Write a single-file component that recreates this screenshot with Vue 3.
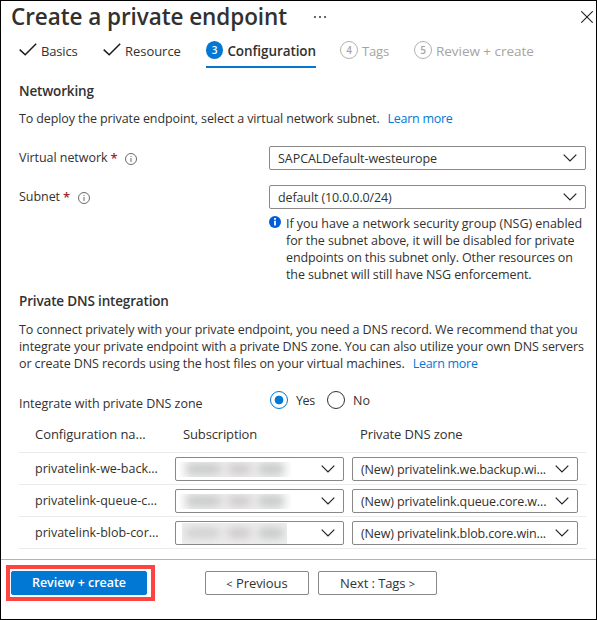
<script setup>
import { ref } from 'vue'

const integrate = ref('yes')
const zones = [
  { name: 'privatelink-we-back...', zone: '(New) privatelink.we.backup.wi...', mask: 'mask-a' },
  { name: 'privatelink-queue-c...', zone: '(New) privatelink.queue.core.w...', mask: 'mask-b' },
  { name: 'privatelink-blob-cor...', zone: '(New) privatelink.blob.core.win...', mask: 'mask-c' },
]
</script>

<template>
  <div class="blade">
    <header class="title-bar">
      <h1>Create a private endpoint</h1>
      <svg class="more" width="12" height="2" viewBox="0 0 12 2"><path d="M0 0h2v2H0zM5 0h2v2H5zM10 0h2v2h-2z" fill="#666" /></svg>
      <svg class="close" width="12" height="12" viewBox="0 0 12 12"><path d="M.3.3l11.4 11.4M11.7.3L.3 11.7" stroke="#222" stroke-width="1.1" fill="none" /></svg>
    </header>

    <nav class="tabs">
      <div class="tab basics">
        <svg width="18" height="13" viewBox="0 0 18 13"><path d="M.7 6.6l5.5 5.2L17.2.7" fill="none" stroke="#1b1a19" stroke-width="1.5" /></svg>
        <span>Basics</span>
      </div>
      <div class="tab resource">
        <svg width="18" height="13" viewBox="0 0 18 13"><path d="M.7 6.6l5.5 5.2L17.2.7" fill="none" stroke="#1b1a19" stroke-width="1.5" /></svg>
        <span>Resource</span>
      </div>
      <div class="tab active"><i>3</i><span>Configuration</span></div>
      <div class="tab pending tags"><i>4</i><span>Tags</span></div>
      <div class="tab pending review"><i>5</i><span>Review + create</span></div>
    </nav>

    <main>
      <h2>Networking</h2>
      <p class="intro">To deploy the private endpoint, select a virtual network subnet.<a>Learn more</a></p>

      <div class="field first">
        <label><span class="vn">Virtual network</span> <b>*</b>
          <svg width="12" height="12" viewBox="0 0 12 12"><circle cx="6" cy="6" r="5.5" fill="none" stroke="#6b6967" /><path d="M6 5v4M6 3v1" stroke="#6b6967" stroke-width="1" /></svg>
        </label>
        <div class="select wide"><span>SAPCALDefault-westeurope</span>
          <svg width="14" height="8" viewBox="0 0 14 8"><path d="M.7.7L7 7 13.3.7" fill="none" stroke="#222" stroke-width="1.2" /></svg>
        </div>
      </div>
      <div class="field">
        <label><span>Subnet</span> <b>*</b>
          <svg width="12" height="12" viewBox="0 0 12 12"><circle cx="6" cy="6" r="5.5" fill="none" stroke="#6b6967" /><path d="M6 5v4M6 3v1" stroke="#6b6967" stroke-width="1" /></svg>
        </label>
        <div class="select wide subnet"><span>default (10.0.0.0/24)</span>
          <svg width="14" height="8" viewBox="0 0 14 8"><path d="M.7.7L7 7 13.3.7" fill="none" stroke="#222" stroke-width="1.2" /></svg>
        </div>
      </div>

      <div class="notice">
        <svg width="12" height="12" viewBox="0 0 12 12"><circle cx="6" cy="6" r="6" fill="#015cda" /><path d="M5.1 2h1.8v1.7H5.1zM5.1 4.7h1.8v4.8H5.1z" fill="#fff" /></svg>
        <p>If you have a network security group (NSG) enabled<br><span class="l2">for the subnet above, it will be disabled for private</span><br><span class="l3">endpoints on this subnet only. Other resources on</span><br><span class="l4">the subnet will still have NSG enforcement.</span></p>
      </div>

      <h2 class="dns-heading">Private DNS integration</h2>
      <p class="dns">To connect privately with your private endpoint, you need a DNS record. We recommend that you<br>integrate your private endpoint with a private DNS zone. You can also utilize your own DNS servers<br>or create DNS records using the host files on your virtual machines.<a>Learn more</a></p>

      <div class="radio-row">
        <span class="question">Integrate with private DNS zone</span>
        <span class="radio" :class="{ on: integrate === 'yes' }" @click="integrate = 'yes'"></span><span class="yes">Yes</span>
        <span class="radio" :class="{ on: integrate === 'no' }" @click="integrate = 'no'"></span><span class="no">No</span>
      </div>

      <div class="grid">
        <div class="grid-row head"><span class="c1">Configuration na...</span><span class="c2">Subscription</span><span class="c3">Private DNS zone</span></div>
        <div v-for="z in zones" :key="z.name" class="grid-row">
          <span class="name">{{ z.name }}</span>
          <div class="select sub"><div class="mask" :class="z.mask"><i></i><i></i><i></i></div>
            <svg width="14" height="8" viewBox="0 0 14 8"><path d="M.7.7L7 7 13.3.7" fill="none" stroke="#222" stroke-width="1.2" /></svg>
          </div>
          <div class="select zone"><span>{{ z.zone }}</span>
            <svg width="14" height="8" viewBox="0 0 14 8"><path d="M.7.7L7 7 13.3.7" fill="none" stroke="#222" stroke-width="1.2" /></svg>
          </div>
        </div>
      </div>
    </main>

    <footer>
      <div class="highlight"><button class="primary">Review + create</button></div>
      <button class="prev"><small>&lt;</small> Previous</button>
      <button class="next">Next : Tags <small>&gt;</small></button>
    </footer>
  </div>
</template>

<style>
body { margin: 0; background: #fff; }
</style>

<style scoped>
* { box-sizing: border-box; margin: 0; padding: 0; }
.blade {
  width: 597px; height: 620px; overflow: hidden;
  display: flex; flex-direction: column;
  border: 1px solid #000; background: #fff; color: #323130;
  font: 12.5px/17px "Open Sans", "Noto Sans", sans-serif;
  white-space: nowrap;
}
i { font-style: normal; }
a { color: #0078d4; letter-spacing: -.27px; margin-left: 8px; }

.title-bar { display: flex; align-items: flex-start; height: 37px; padding: 0 3px 0 10px; }
h1 { width: 303px; font-size: 22.5px; line-height: 32px; font-weight: 600; letter-spacing: -.07px; }
.more { margin-top: 15px; }
.close { margin: 10px 0 0 auto; }

.tabs { display: flex; height: 30px; padding-left: 18px; font-size: 13px; }
.tab { display: flex; height: 30px; padding-top: 4px; }
.tab span { line-height: 19px; }
.tab svg { margin: 1px 4px 0 0; }
.basics { width: 84px; letter-spacing: -.15px; }
.resource { width: 103px; letter-spacing: -.04px; }
.tab i {
  width: 18px; height: 18px; margin: -1px 4px 0 0; border-radius: 50%;
  font-size: 10px; line-height: 18px; font-weight: 600; text-align: center; letter-spacing: 0;
}
.active { width: 110px; margin-right: 24px; border-bottom: 2px solid #0078d4; font-size: 13.5px; font-weight: 600; letter-spacing: -.08px; }
.active i { background: #0078d4; color: #fff; }
.pending { color: #a6a4a2; }
.pending i { border: 1px solid #b3b1af; line-height: 16px; }
.tags { width: 74px; letter-spacing: -.16px; }
.review { font-size: 13.5px; letter-spacing: -.04px; }

main { height: 491px; padding: 13px 10px 0 18px; }
h2 { font-size: 13.5px; line-height: 20px; font-weight: 600; letter-spacing: -.16px; }
.intro { margin-top: 9px; letter-spacing: -.11px; }
.field { display: flex; height: 24px; margin-top: 15px; }
.field.first { margin-top: 19px; }
label { display: flex; width: 250px; line-height: 24px; }
label b { width: 6px; margin-left: 3px; color: #a4262c; font-size: 13px; font-weight: 600; }
label svg { margin: 7px 0 0 9px; }
label { letter-spacing: -.05px; }
.select {
  display: flex; align-items: center; justify-content: space-between;
  height: 24px; border: 1px solid #8a8886; border-radius: 2px; padding: 0 8px;
}
.wide { width: 317px; letter-spacing: -.05px; }
.subnet { letter-spacing: -.12px; }
.notice { display: flex; margin: 6px 0 0 250px; letter-spacing: -.04px; }
.notice svg { margin: 1px 5px 0 0; }
.l2 { letter-spacing: -.07px; }
.l3 { letter-spacing: -.12px; }
.l4 { letter-spacing: -.1px; }
.dns-heading { margin-top: 8px; }
.dns { margin-top: 10px; letter-spacing: -.09px; }

.radio-row { display: flex; height: 18px; margin-top: 19px; }
.question { width: 251px; padding-top: 4px; letter-spacing: -.045px; }
.radio { width: 18px; height: 18px; border: 1px solid #323130; border-radius: 50%; }
.radio.on { border-color: #0078d4; background: radial-gradient(circle, #0078d4 0 4px, transparent 4.7px); }
.yes { width: 39px; padding-left: 8px; letter-spacing: -.4px; line-height: 19px; }
.no { padding-left: 8px; line-height: 19px; }

.grid { width: 567px; margin-top: 8px; }
.grid-row { display: flex; align-items: center; height: 32px; border-bottom: 1px solid #edebe9; padding: 1px 8px 0 16px; }
.head { height: 36px; padding-top: 0; font-size: 13px; font-weight: 500; }
.c1 { width: 148px; letter-spacing: -.06px; }
.c2 { width: 177px; letter-spacing: -.14px; }
.c3 { letter-spacing: -.12px; }
.name { width: 140px; margin-top: -2px; }
.sub { width: 169px; margin-right: 8px; padding-left: 2px; }
.zone { width: 226px; letter-spacing: -.14px; }
.mask { display: flex; align-items: center; gap: 7px; width: 114px; height: 15px; padding: 0 8px; overflow: hidden; background: linear-gradient(90deg, #fff, #ededed 12%, #ededed 88%, #fff); }
.mask i { height: 10px; border-radius: 5px; background: #c6c7c7; filter: blur(4px); }
.mask i:nth-child(1) { width: 36px; }
.mask i:nth-child(2) { width: 24px; background: #cdc8cc; }
.mask i:nth-child(3) { width: 27px; background: #c4c8c6; }
.mask-c { width: 105px; height: 21px; margin-left: 4px; padding: 0 3px; background: #ededed; }
.mask-c i { background: #cfcfd0; }

footer { display: flex; height: 60px; border-top: 1px solid #b5b3b1; padding: 5px 0 0 5px; }
.highlight { width: 149px; height: 36px; padding: 6px 8px 0 5px; outline: 4px solid #ff4343; outline-offset: -4px; }
button { display: block; font: 500 13px/22px "Open Sans", "Noto Sans", sans-serif; color: #323130; background: #fff; border: 1px solid #8a8886; border-radius: 2px; height: 24px; margin-top: 6px; }
.primary { width: 136px; margin: 0; border-color: #0078d4; background: #0078d4; color: #fff; font-size: 12.5px; font-weight: 600; letter-spacing: -.04px; }
.prev { width: 104px; margin-left: 50px; letter-spacing: -.05px; }
.next { width: 119px; margin-left: 9px; letter-spacing: -.09px; }
small { font-size: 11px; }
</style>
